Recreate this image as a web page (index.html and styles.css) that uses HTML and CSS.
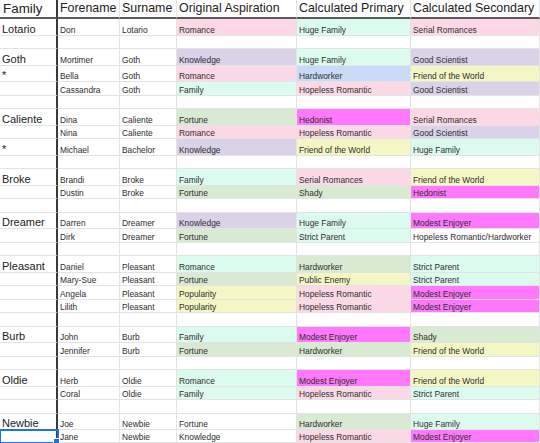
FILE: index.html
```html
<!DOCTYPE html>
<html>
<head>
<meta charset="utf-8">
<link rel="stylesheet" href="styles.css">
</head>
<body>
<div class="sheet">
  <div class="row head"><div class="c fam">Family</div><div class="c">Forename</div><div class="c">Surname</div><div class="c">Original Aspiration</div><div class="c">Calculated Primary</div><div class="c">Calculated Secondary</div></div>

  <div class="row tall"><div class="c fam">Lotario</div><div class="c">Don</div><div class="c">Lotario</div><div class="c pk">Romance</div><div class="c mt">Huge Family</div><div class="c pk">Serial Romances</div></div>
  <div class="row"><div class="c fam"></div><div class="c"></div><div class="c"></div><div class="c"></div><div class="c"></div><div class="c"></div></div>

  <div class="row tall"><div class="c fam">Goth</div><div class="c">Mortimer</div><div class="c">Goth</div><div class="c lv">Knowledge</div><div class="c mt">Huge Family</div><div class="c lv">Good Scientist</div></div>
  <div class="row tall"><div class="c fam">*</div><div class="c">Bella</div><div class="c">Goth</div><div class="c pk">Romance</div><div class="c bl">Hardworker</div><div class="c yl">Friend of the World</div></div>
  <div class="row"><div class="c fam"></div><div class="c">Cassandra</div><div class="c">Goth</div><div class="c mt">Family</div><div class="c pk">Hopeless Romantic</div><div class="c lv">Good Scientist</div></div>
  <div class="row"><div class="c fam"></div><div class="c"></div><div class="c"></div><div class="c"></div><div class="c"></div><div class="c"></div></div>

  <div class="row tall"><div class="c fam">Caliente</div><div class="c">Dina</div><div class="c">Caliente</div><div class="c sg">Fortune</div><div class="c mg">Hedonist</div><div class="c pk">Serial Romances</div></div>
  <div class="row"><div class="c fam"></div><div class="c">Nina</div><div class="c">Caliente</div><div class="c pk">Romance</div><div class="c pk">Hopeless Romantic</div><div class="c lv">Good Scientist</div></div>
  <div class="row tall"><div class="c fam">*</div><div class="c">Michael</div><div class="c">Bachelor</div><div class="c lv">Knowledge</div><div class="c yl">Friend of the World</div><div class="c mt">Huge Family</div></div>
  <div class="row"><div class="c fam"></div><div class="c"></div><div class="c"></div><div class="c"></div><div class="c"></div><div class="c"></div></div>

  <div class="row tall"><div class="c fam">Broke</div><div class="c">Brandi</div><div class="c">Broke</div><div class="c mt">Family</div><div class="c pk">Serial Romances</div><div class="c yl">Friend of the World</div></div>
  <div class="row"><div class="c fam"></div><div class="c">Dustin</div><div class="c">Broke</div><div class="c sg">Fortune</div><div class="c sg">Shady</div><div class="c mg">Hedonist</div></div>
  <div class="row"><div class="c fam"></div><div class="c"></div><div class="c"></div><div class="c"></div><div class="c"></div><div class="c"></div></div>

  <div class="row tall"><div class="c fam">Dreamer</div><div class="c">Darren</div><div class="c">Dreamer</div><div class="c lv">Knowledge</div><div class="c mt">Huge Family</div><div class="c mg">Modest Enjoyer</div></div>
  <div class="row"><div class="c fam"></div><div class="c">Dirk</div><div class="c">Dreamer</div><div class="c sg">Fortune</div><div class="c mt">Strict Parent</div><div class="c">Hopeless Romantic/Hardworker</div></div>
  <div class="row"><div class="c fam"></div><div class="c"></div><div class="c"></div><div class="c"></div><div class="c"></div><div class="c"></div></div>

  <div class="row tall"><div class="c fam">Pleasant</div><div class="c">Daniel</div><div class="c">Pleasant</div><div class="c mt">Romance</div><div class="c sg">Hardworker</div><div class="c mt">Strict Parent</div></div>
  <div class="row"><div class="c fam"></div><div class="c">Mary-Sue</div><div class="c">Pleasant</div><div class="c sg">Fortune</div><div class="c yl">Public Enemy</div><div class="c mt">Strict Parent</div></div>
  <div class="row"><div class="c fam"></div><div class="c">Angela</div><div class="c">Pleasant</div><div class="c yl">Popularity</div><div class="c pk">Hopeless Romantic</div><div class="c mg">Modest Enjoyer</div></div>
  <div class="row"><div class="c fam"></div><div class="c">Lilith</div><div class="c">Pleasant</div><div class="c yl">Popularity</div><div class="c pk">Hopeless Romantic</div><div class="c mg">Modest Enjoyer</div></div>
  <div class="row"><div class="c fam"></div><div class="c"></div><div class="c"></div><div class="c"></div><div class="c"></div><div class="c"></div></div>

  <div class="row tall"><div class="c fam">Burb</div><div class="c">John</div><div class="c">Burb</div><div class="c mt">Family</div><div class="c mg">Modest Enjoyer</div><div class="c sg">Shady</div></div>
  <div class="row"><div class="c fam"></div><div class="c">Jennifer</div><div class="c">Burb</div><div class="c sg">Fortune</div><div class="c sg">Hardworker</div><div class="c yl">Friend of the World</div></div>
  <div class="row"><div class="c fam"></div><div class="c"></div><div class="c"></div><div class="c"></div><div class="c"></div><div class="c"></div></div>

  <div class="row tall"><div class="c fam">Oldie</div><div class="c">Herb</div><div class="c">Oldie</div><div class="c mt">Romance</div><div class="c mg">Modest Enjoyer</div><div class="c yl">Friend of the World</div></div>
  <div class="row"><div class="c fam"></div><div class="c">Coral</div><div class="c">Oldie</div><div class="c mt">Family</div><div class="c pk">Hopeless Romantic</div><div class="c mt">Strict Parent</div></div>
  <div class="row"><div class="c fam"></div><div class="c"></div><div class="c"></div><div class="c"></div><div class="c"></div><div class="c"></div></div>

  <div class="row tall"><div class="c fam">Newbie</div><div class="c">Joe</div><div class="c">Newbie</div><div class="c">Fortune</div><div class="c sg">Hardworker</div><div class="c mt">Huge Family</div></div>
  <div class="row last"><div class="c fam selected"></div><div class="c">Jane</div><div class="c">Newbie</div><div class="c">Knowledge</div><div class="c pk">Hopeless Romantic</div><div class="c mg">Modest Enjoyer</div></div>
</div>
</body>
</html>
```

FILE: styles.css
```css
html, body {
  margin: 0;
  padding: 0;
  background: #ffffff;
  overflow: hidden;
}

body {
  font-family: "Liberation Sans", Arial, sans-serif;
  color: #2e2e2e;
}

.sheet {
  width: 540px;
}

.row {
  display: grid;
  grid-template-columns: 58px 62px 57px 120px 114px 129px;
  height: 13.5px;
}

.row.tall {
  height: 16.5px;
}

.row.last {
  height: 13px;
}

.row.head {
  height: 19px;
}

.c {
  box-sizing: border-box;
  display: flex;
  align-items: flex-end;
  padding: 0 2px 0 2px;
  border-right: 1px solid #e2e3e3;
  border-bottom: 1px solid #e2e3e3;
  font-size: 8.4px;
  line-height: 9px;
  white-space: nowrap;
  overflow: hidden;
  min-width: 0;
}

.c.fam {
  position: relative;
  overflow: visible;
  padding-left: 2px;
  border-right: 2px solid #3a3a3a;
  font-size: 11px;
  line-height: 11px;
  color: #222222;
}

.head .c {
  font-size: 12.4px;
  line-height: 13px;
  color: #222222;
  border-bottom: 2px solid #5a5a5a;
  padding-bottom: 2px;
}

.head .c.fam {
  font-size: 13.4px;
  padding-left: 3px;
}

.pk { background: #fdd9e7; }
.lv { background: #d9d2e9; }
.mt { background: #dcfbef; }
.sg { background: #d9ead3; }
.bl { background: #c9daf8; }
.yl { background: #f4f7c3; }
.mg { background: #ff78fd; }

.selected {
  outline: 2px solid #1a73e8;
  outline-offset: -1px;
}

.selected::after {
  content: "";
  position: absolute;
  right: -4px;
  bottom: -3px;
  width: 5px;
  height: 5px;
  background: #1a73e8;
  border: 1px solid #ffffff;
}
```
